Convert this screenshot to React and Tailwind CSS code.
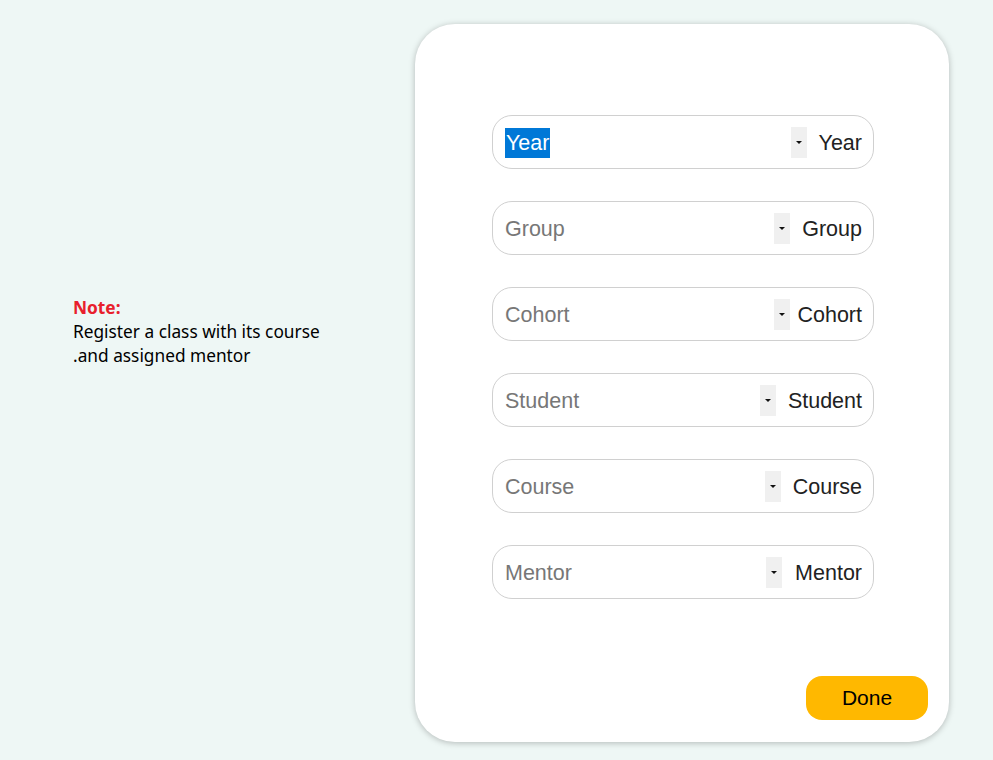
import React from "react";

const fields = [
  { ph: "Year", label: "Year", gap: "gap-3", selected: true },
  { ph: "Group", label: "Group", gap: "gap-3" },
  { ph: "Cohort", label: "Cohort", gap: "gap-[7px]" },
  { ph: "Student", label: "Student", gap: "gap-3" },
  { ph: "Course", label: "Course", gap: "gap-3" },
  { ph: "Mentor", label: "Mentor", gap: "gap-[13px]" },
];

function Field({ ph, label, gap, selected }) {
  return (
    <div className="flex h-[54px] w-[382px] items-center rounded-[20px] border border-[#d0d0d0] bg-white pl-3 pr-[11px]">
      <div className="flex-1 pt-1 text-[21.5px] leading-none">
        {selected ? (
          <span className="bg-[#0078d7] px-px py-[3px] text-white">{ph}</span>
        ) : (
          <span className="text-[#777777]">{ph}</span>
        )}
      </div>
      <div className={`flex items-center ${gap}`}>
        <div className="flex h-[31px] w-4 items-center justify-center bg-[#f0f0f0]">
          <div className="h-0 w-0 border-x-[3px] border-t-[3px] border-x-transparent border-t-[#111]" />
        </div>
        <span className="pt-1 text-[21.5px] leading-none text-[#222]">{label}</span>
      </div>
    </div>
  );
}

export default function App() {
  return (
    <div
      className="flex min-h-[760px] w-full bg-[#eef7f5]"
      style={{ fontFamily: '"Liberation Sans", Arial, sans-serif' }}
    >
      <div className="w-[415px] shrink-0 pl-[73px] pt-[296px]">
        <div
          className="text-[17.3px] leading-[24px] text-black"
          style={{ fontFamily: '"Noto Sans", "Open Sans", sans-serif' }}
        >
          <div className="font-bold text-[#e8202c]">Note:</div>
          <div>Register a class with its course</div>
          <div>.and assigned mentor</div>
        </div>
      </div>
      <div className="mt-6 flex h-[718px] w-[534px] flex-col rounded-[40px] bg-white pb-[22px] pl-[77px] pr-[21px] pt-[91px] shadow-[0_1px_6px_rgba(0,0,0,0.25)]">
        <div className="flex flex-col gap-8">
          {fields.map((f) => (
            <Field key={f.label} {...f} />
          ))}
        </div>
        <div className="mt-auto flex justify-end">
          <button className="h-11 w-[122px] rounded-2xl bg-[#ffb800] text-[21px] text-black">
            Done
          </button>
        </div>
      </div>
    </div>
  );
}
